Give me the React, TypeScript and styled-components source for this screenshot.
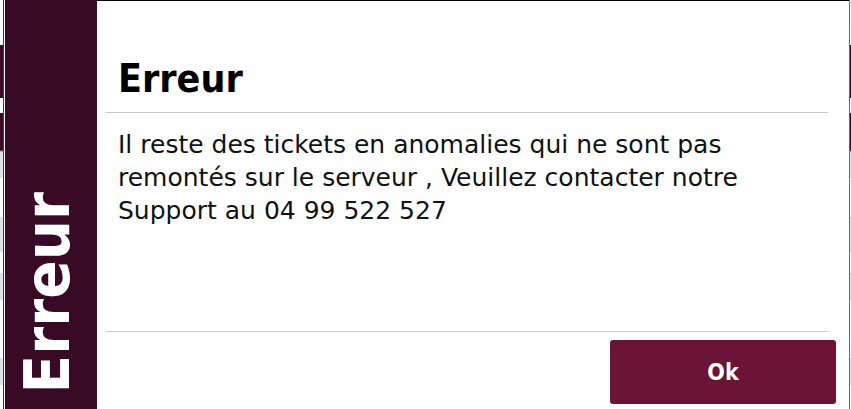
import React from 'react'
import styled, { createGlobalStyle } from 'styled-components'

const GlobalStyle = createGlobalStyle`
  html, body {
    margin: 0;
    padding: 0;
    background: #ffffff;
  }
  body {
    font-family: "DejaVu Sans Condensed", "DejaVu Sans", Verdana, sans-serif;
  }
`

// the app behind the dialog only shows as thin slivers at the edges
const Backdrop = styled.div`
  width: 851px;
  height: 409px;
  display: flex;
  overflow: hidden;
`

const Gutter = styled.div<{ width: number }>`
  flex: 0 0 ${(p) => p.width}px;
  background: linear-gradient(
    to bottom,
    #ffffff 0 45px,
    #3a0a28 45px 98px,
    #ffffff 98px 113px,
    #3a0a28 113px 150px,
    #e2e2e2 152px 178px,
    #ffffff 178px 217px,
    #e2e2e2 217px 252px,
    #ffffff 252px 273px,
    #e2e2e2 273px 300px,
    #ffffff 300px 358px,
    #e2e2e2 358px 385px,
    #ffffff 385px
  );
`

const Window = styled.div`
  flex: 1;
  display: flex;
  border-left: 1px solid #3c3c3c;
  border-right: 1px solid #6a6a6a;
  padding-left: 1px;
  background: #ffffff;
`

const Sidebar = styled.aside`
  flex: 0 0 92px;
  background: #380a26;
  display: flex;
  justify-content: center;
  align-items: flex-end;
  padding-bottom: 16px;
  box-sizing: border-box;
`

const SideLabel = styled.span`
  writing-mode: vertical-rl;
  transform: rotate(180deg);
  color: #ffffff;
  font-weight: bold;
  font-size: 63px;
  line-height: 63px;
  margin-left: -8px;
`

const Content = styled.section`
  flex: 1;
  display: flex;
  flex-direction: column;
  border-top: 1px solid #000000;
  padding: 55px 21px 5px 9px;
`

const Title = styled.h1`
  margin: 0 0 10px 12px;
  font-size: 39px;
  line-height: 46px;
  font-weight: bold;
  color: #000000;
`

const Rule = styled.hr`
  margin: 0;
  border: 0;
  height: 1px;
  background: #c8c8c8;
`

const Message = styled.p`
  flex: 1;
  margin: 15px 0 0 12px;
  font-family: "DejaVu Sans", Verdana, sans-serif;
  font-size: 25px;
  line-height: 33px;
  color: #111111;
`

const Footer = styled.div`
  display: flex;
  justify-content: flex-end;
  padding-top: 8px;
  margin-right: -8px;
`

const OkButton = styled.button`
  width: 226px;
  height: 64px;
  border: 0;
  border-radius: 3px;
  background: #6b1436;
  color: #ffffff;
  font-family: inherit;
  font-weight: bold;
  font-size: 23px;
  cursor: pointer;
`

const App = () => {
  return (
    <>
      <GlobalStyle />
      <Backdrop>
        <Gutter width={3} />
        <Window>
          <Sidebar>
            <SideLabel>Erreur</SideLabel>
          </Sidebar>
          <Content>
            <Title>Erreur</Title>
            <Rule />
            <Message>
              Il reste des tickets en anomalies qui ne sont pas
              <br />
              remontés sur le serveur , Veuillez contacter notre
              <br />
              Support au 04 99 522 527
            </Message>
            <Rule />
            <Footer>
              <OkButton type="button">Ok</OkButton>
            </Footer>
          </Content>
        </Window>
        <Gutter width={1} />
      </Backdrop>
    </>
  )
}

export default App
